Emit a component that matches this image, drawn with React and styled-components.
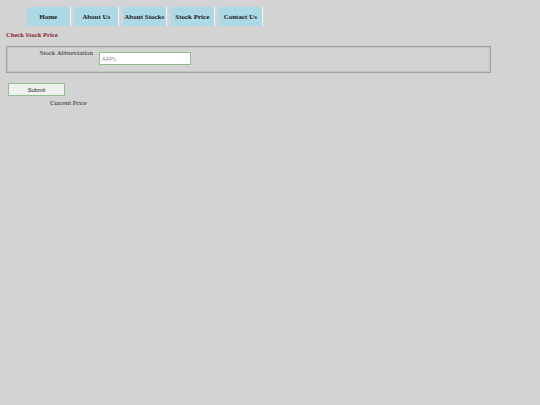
import React from "react";
import styled, { createGlobalStyle } from "styled-components";

const GlobalStyle = createGlobalStyle`
  html, body {
    margin: 0;
    padding: 0;
    background: #d3d3d3;
    font-family: "Liberation Serif", "Times New Roman", serif;
  }
`;

const Page = styled.div`
  width: 540px;
  min-height: 405px;
  background: #d3d3d3;
`;

const Nav = styled.ul`
  display: flex;
  gap: 4.5px;
  list-style: none;
  margin: 0;
  padding: 7px 0 0 27px;
`;

const NavItem = styled.li`
  width: 42.5px;
  height: 19px;
  display: flex;
  align-items: center;
  justify-content: center;
  background: #add8e6;
  border-right: 1px solid #f4f8fa;
  font-weight: bold;
  font-size: 7px;
  color: #1a1a1a;
  white-space: nowrap;
`;

const Heading = styled.h2`
  margin: 0;
  padding: 5px 0 0 6px;
  font-size: 6.6px;
  line-height: 8px;
  font-weight: bold;
  color: #8b2434;
`;

const Field = styled.fieldset`
  box-sizing: border-box;
  width: 485px;
  height: 27px;
  margin: 7px 0 0 6px;
  padding: 0;
  border: 1px solid #a2a2a2;
  box-shadow: inset 0 0 0 1px #c2c2c2;
  display: flex;
  align-items: flex-start;
`;

const Label = styled.label`
  width: 86px;
  padding-top: 2px;
  text-align: right;
  font-size: 6.9px;
  font-weight: normal;
  line-height: 8px;
  color: #2a2a2a;
`;

const Input = styled.input`
  box-sizing: border-box;
  width: 92px;
  height: 13px;
  margin: 5px 0 0 6px;
  padding: 0 0 0 2px;
  border: 1px solid #8fbf8f;
  background: #ffffff;
  font-family: "Liberation Sans", Arial, sans-serif;
  font-size: 5.7px;
  color: #777;
  outline: none;
  &::placeholder {
    color: #8a8a8a;
  }
`;

const Button = styled.button`
  display: block;
  box-sizing: border-box;
  width: 57px;
  height: 13px;
  margin: 10px 0 0 8px;
  padding: 0;
  border: 1px solid #8fbf8f;
  background: #f0f0f0;
  font-family: "Liberation Sans", Arial, sans-serif;
  font-size: 5.7px;
  color: #1a1a1a;
`;

const Result = styled.p`
  margin: 2.5px 0 0 50px;
  font-size: 6.9px;
  font-weight: normal;
  line-height: 8px;
  color: #2a2a2a;
`;

const links = ["Home", "About Us", "About Stocks", "Stock Price", "Contact Us"];

export default function App() {
  return (
    <Page>
      <GlobalStyle />
      <Nav>
        {links.map((l) => (
          <NavItem key={l}>{l}</NavItem>
        ))}
      </Nav>
      <Heading>Check Stock Price</Heading>
      <Field>
        <Label htmlFor="abbr">Stock Abbreviation</Label>
        <Input id="abbr" placeholder="AAPL" />
      </Field>
      <Button type="button">Submit</Button>
      <Result>Current Price</Result>
    </Page>
  );
}
